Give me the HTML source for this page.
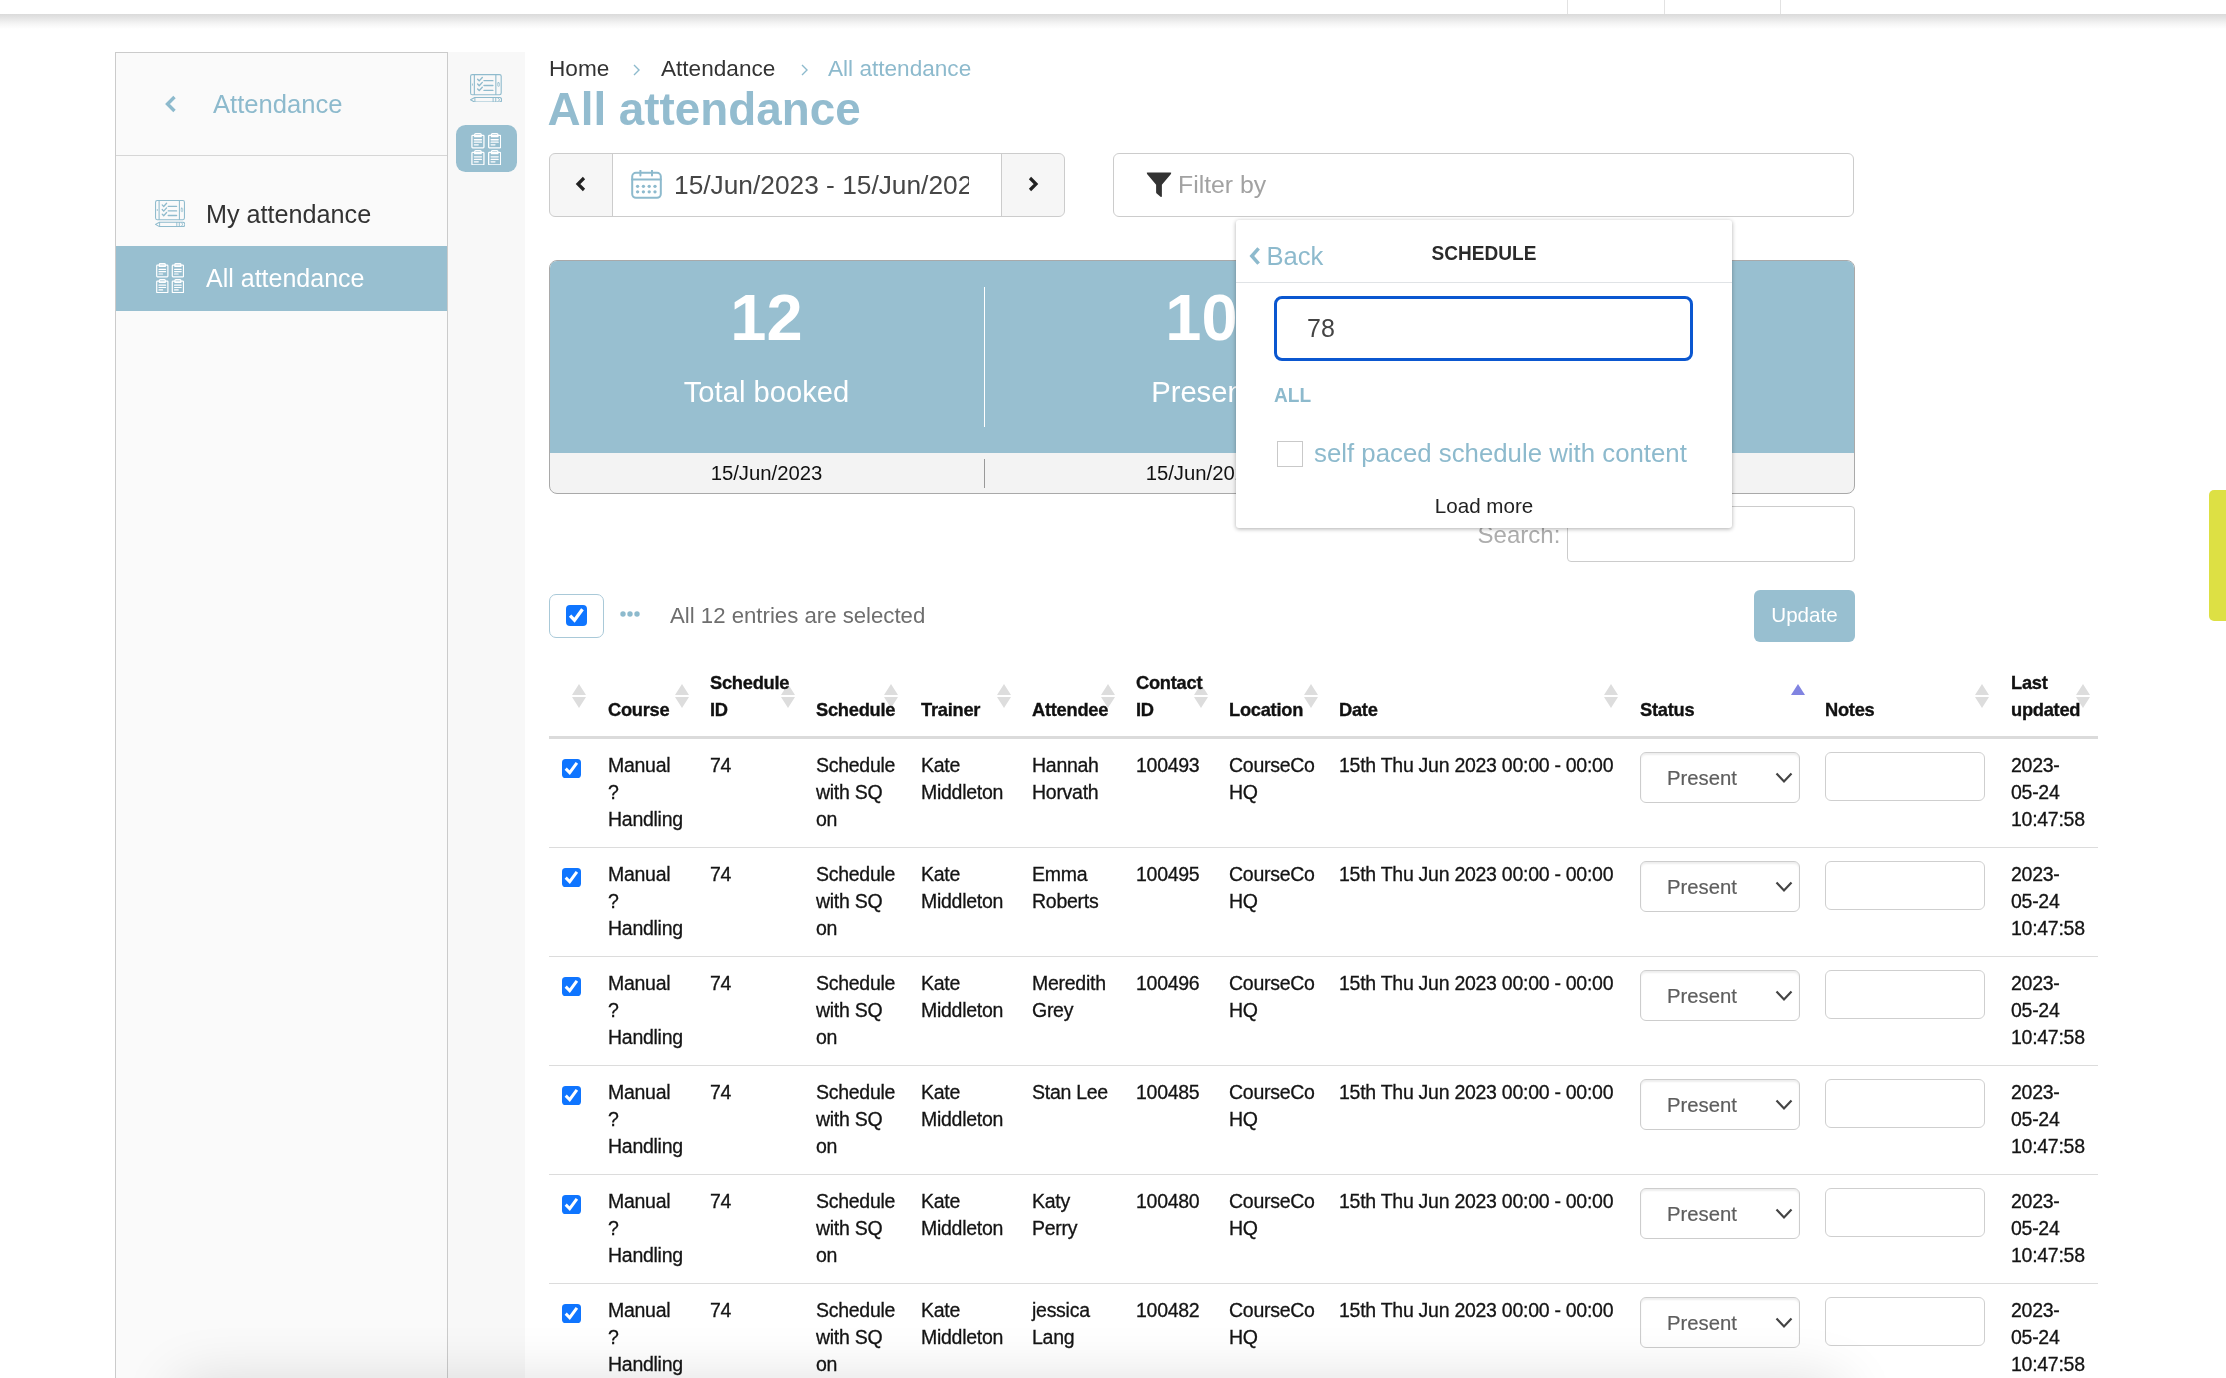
<!DOCTYPE html>
<html lang="en"><head><meta charset="utf-8"><title>All attendance</title>
<style>
*{box-sizing:border-box;margin:0;padding:0}
html,body{width:2226px;height:1378px;overflow:hidden;background:#fff}
body{font-family:"Liberation Sans",sans-serif;color:#212121;position:relative}
.abs{position:absolute}
.t{position:absolute;white-space:nowrap;line-height:1}
.blue{color:#8dbacd}
#hdr{left:0;top:0;width:2226px;height:14px;background:#fff}
#hsh{left:0;top:14px;width:2226px;height:15px;background:linear-gradient(#dadada,#e6e6e6 30%,#f5f5f5 65%,#fff)}
.vl{position:absolute;top:0;width:1.2px;height:14px;background:#e2e2e2}
#side{left:115px;top:52px;width:333px;height:1340px;background:#fafafa;border:1.3px solid #cbcbcb;border-bottom:none}
#strip{left:448px;top:52px;width:77px;height:1340px;background:#f8f8f8}
#sel{left:116px;top:246px;width:331px;height:65px;background:#98bfd0}
#sdiv{left:116px;top:154.6px;width:331px;height:1.3px;background:#d6d6d6}
#ibox{left:456px;top:125px;width:61px;height:47px;border-radius:9.5px;background:#98bfd0}
.grp{border:1.5px solid #ccc;background:#fff}
table{position:absolute;left:549px;top:660px;width:1549px;border-collapse:separate;border-spacing:0;table-layout:fixed;font-size:19.5px;letter-spacing:-0.27px;line-height:27.33px}
th{font-weight:700;text-align:left;vertical-align:bottom;height:79px;padding:0 0 13px 13px;border-bottom:3px solid #dbdbdb;font-size:19px;line-height:27px;white-space:nowrap;color:#111}
th span{display:inline-block;transform:scaleX(.962);transform-origin:left bottom;-webkit-text-stroke:0.35px #111}
td{vertical-align:top;padding:12.6px 0 0 13px;height:109px;border-bottom:1px solid #dcdcdc;white-space:nowrap;color:#141414;-webkit-text-stroke:0.3px #141414}
td.c{padding:0;position:relative}
.cb{position:absolute;left:13px;top:20px}
.sort{position:absolute;top:684px}
.selb{position:absolute;left:13px;top:13px;width:160px;height:51px;border:1.5px solid #cdcdcd;border-radius:6px;background:#fff;box-shadow:inset 0 2px 2px rgba(0,0,0,.07);letter-spacing:0;-webkit-text-stroke:0.2px #5e5e5e}
.selb span{position:absolute;left:26px;top:15px;font-size:20.3px;line-height:1;color:#5e5e5e}
.selb svg{position:absolute;left:134px;top:19px}
.note{position:absolute;left:13px;top:13px;width:160px;height:49px;border:1.5px solid #cfcfcf;border-radius:6px;background:#fff}
td.r{position:relative;padding:0}
</style></head><body><div id="wrap" style="position:absolute;left:0;top:0;width:2226px;height:1378px;overflow:hidden;will-change:transform">

<div id="hsh" class="abs"></div><div id="hdr" class="abs"><i class="vl" style="left:1567px"></i><i class="vl" style="left:1664px"></i><i class="vl" style="left:1780px"></i></div>
<div id="side" class="abs"></div><div id="strip" class="abs"></div><div id="sdiv" class="abs"></div><div id="sel" class="abs"></div><div id="ibox" class="abs"></div>
<svg class="abs" style="left:163px;top:94px" width="16" height="20" viewBox="0 0 16 20"><path d="M11.5 3L4.5 10L11.5 17" fill="none" stroke="#8dbacd" stroke-width="3.4"/></svg>
<div class="t blue" style="left:213px;top:91.8px;font-size:25.6px">Attendance</div>
<div class="abs" style="left:155px;top:199.8px"><svg width="30" height="27" viewBox="0 0 30 27" fill="none" stroke="#8fbbcd" stroke-width="1.05" stroke-linecap="round" stroke-linejoin="round"><rect x="0.55" y="0.55" width="28.9" height="19.1" rx="1.6"/><path d="M4.1 0.8V19.4M24.4 0.8V19.4"/><rect x="26.2" y="8.2" width="1.5" height="3.4" rx="0.4" stroke-width="0.7"/><path d="M2.3 9.4V10.6" stroke-width="0.8"/><path d="M7.2 4.9l1.5 1.6 2.9-3.2M7.2 9.5l1.5 1.6 2.9-3.2M7.2 14.1l1.5 1.6 2.9-3.2" stroke-width="1.3"/><path d="M13.2 6.3h8.4M13.2 10.9h8.4M13.2 15.5h8.4" stroke-width="1.3"/><path d="M0.5 24.4l4-2.2h23.2a2.2 2.2 0 0 1 0 4.4H4.5z"/><path d="M4.6 22.4v4M21.8 22.4v4M24.3 22.4v4M26.4 22.8l1.6 1.6-1.6 1.6" stroke-width="0.9"/></svg></div>
<div class="t" style="left:206px;top:202.2px;font-size:25.2px;color:#333">My attendance</div>
<div class="abs" style="left:155.8px;top:263.2px"><svg width="28.2" height="30.2" viewBox="0 0 28.2 30.2" fill="none" stroke="#fff" stroke-width="1.2" stroke-linecap="round" stroke-linejoin="round"><rect x="0.70" y="2.20" width="11.2" height="11.6" rx="0.7"/><path d="M3.30 3.40V1.50q0-.9 .9-.9h4.2q.9 0 .9 .9V3.40z"/><path d="M3.00 6.30h6.6M3.00 8.60h6.6M3.00 11.00h3.6"/><rect x="16.30" y="2.20" width="11.2" height="11.6" rx="0.7"/><path d="M18.90 3.40V1.50q0-.9 .9-.9h4.2q.9 0 .9 .9V3.40z"/><path d="M18.60 6.30h6.6M18.60 8.60h6.6M18.60 11.00h3.6"/><rect x="0.70" y="18.10" width="11.2" height="11.6" rx="0.7"/><path d="M3.30 19.30V17.40q0-.9 .9-.9h4.2q.9 0 .9 .9V19.30z"/><path d="M3.00 22.20h6.6M3.00 24.50h6.6M3.00 26.90h3.6"/><rect x="16.30" y="18.10" width="11.2" height="11.6" rx="0.7"/><path d="M18.90 19.30V17.40q0-.9 .9-.9h4.2q.9 0 .9 .9V19.30z"/><path d="M18.60 22.20h6.6M18.60 24.50h6.6M18.60 26.90h3.6"/></svg></div>
<div class="t" style="left:206px;top:266.2px;font-size:25px;color:#fff">All attendance</div>
<div class="abs" style="left:470.2px;top:73.6px"><svg width="31.8" height="28.6" viewBox="0 0 30 27" fill="none" stroke="#8fbbcd" stroke-width="1.05" stroke-linecap="round" stroke-linejoin="round"><rect x="0.55" y="0.55" width="28.9" height="19.1" rx="1.6"/><path d="M4.1 0.8V19.4M24.4 0.8V19.4"/><rect x="26.2" y="8.2" width="1.5" height="3.4" rx="0.4" stroke-width="0.7"/><path d="M2.3 9.4V10.6" stroke-width="0.8"/><path d="M7.2 4.9l1.5 1.6 2.9-3.2M7.2 9.5l1.5 1.6 2.9-3.2M7.2 14.1l1.5 1.6 2.9-3.2" stroke-width="1.3"/><path d="M13.2 6.3h8.4M13.2 10.9h8.4M13.2 15.5h8.4" stroke-width="1.3"/><path d="M0.5 24.4l4-2.2h23.2a2.2 2.2 0 0 1 0 4.4H4.5z"/><path d="M4.6 22.4v4M21.8 22.4v4M24.3 22.4v4M26.4 22.8l1.6 1.6-1.6 1.6" stroke-width="0.9"/></svg></div>
<div class="abs" style="left:470.7px;top:133.1px"><svg width="30.6" height="32.4" viewBox="0 0 28.2 30.2" fill="none" stroke="#fff" stroke-width="1.2" stroke-linecap="round" stroke-linejoin="round"><rect x="0.70" y="2.20" width="11.2" height="11.6" rx="0.7"/><path d="M3.30 3.40V1.50q0-.9 .9-.9h4.2q.9 0 .9 .9V3.40z"/><path d="M3.00 6.30h6.6M3.00 8.60h6.6M3.00 11.00h3.6"/><rect x="16.30" y="2.20" width="11.2" height="11.6" rx="0.7"/><path d="M18.90 3.40V1.50q0-.9 .9-.9h4.2q.9 0 .9 .9V3.40z"/><path d="M18.60 6.30h6.6M18.60 8.60h6.6M18.60 11.00h3.6"/><rect x="0.70" y="18.10" width="11.2" height="11.6" rx="0.7"/><path d="M3.30 19.30V17.40q0-.9 .9-.9h4.2q.9 0 .9 .9V19.30z"/><path d="M3.00 22.20h6.6M3.00 24.50h6.6M3.00 26.90h3.6"/><rect x="16.30" y="18.10" width="11.2" height="11.6" rx="0.7"/><path d="M18.90 19.30V17.40q0-.9 .9-.9h4.2q.9 0 .9 .9V19.30z"/><path d="M18.60 22.20h6.6M18.60 24.50h6.6M18.60 26.90h3.6"/></svg></div>
<div class="t" style="left:549px;top:58px;font-size:22.6px;color:#333">Home</div>
<svg class="abs" style="left:632.2px;top:62.6px" width="9" height="14" viewBox="0 0 9 14"><path d="M2 2L7 7L2 12" fill="none" stroke="#8dbacd" stroke-width="1.4"/></svg>
<div class="t" style="left:661px;top:58px;font-size:22.6px;color:#333">Attendance</div>
<svg class="abs" style="left:800.2px;top:62.6px" width="9" height="14" viewBox="0 0 9 14"><path d="M2 2L7 7L2 12" fill="none" stroke="#8dbacd" stroke-width="1.4"/></svg>
<div class="t blue" style="left:828px;top:58px;font-size:22.6px">All attendance</div>
<div class="t blue" style="left:547.6px;top:87px;font-size:45.8px;font-weight:700;color:#93bccf">All attendance</div>
<div class="abs grp" style="left:549px;top:153px;width:516px;height:64px;border-radius:6px;background:#f6f6f6"></div>
<div class="abs" style="left:612px;top:154px;width:390px;height:62px;background:#fff;border-left:1.5px solid #ccc;border-right:1.5px solid #ccc"></div>
<svg class="abs" style="left:574px;top:174.5px" width="14" height="18" viewBox="0 0 14 18"><path d="M10 3L4 9L10 15" fill="none" stroke="#222" stroke-width="3.2"/></svg>
<svg class="abs" style="left:1026px;top:175px" width="14" height="18" viewBox="0 0 14 18"><path d="M4 3L10 9L4 15" fill="none" stroke="#222" stroke-width="3.2"/></svg>
<svg class="abs" style="left:631px;top:170.2px" width="31" height="29" viewBox="0 0 31 29" fill="none" stroke="#8dbacd" stroke-width="2"><rect x="1.2" y="2.8" width="28.6" height="25" rx="3.8"/><path d="M1.2 9.6h28.6M9.4 0.6v5M21 0.6v5" stroke-linecap="round"/><g fill="#8dbacd" stroke="none"><circle cx="6.6" cy="16.3" r="1.65"/><circle cx="12.4" cy="16.3" r="1.65"/><circle cx="18.2" cy="16.3" r="1.65"/><circle cx="24" cy="16.3" r="1.65"/><circle cx="6.6" cy="21.8" r="1.65"/><circle cx="12.4" cy="21.8" r="1.65"/><circle cx="18.2" cy="21.8" r="1.65"/><circle cx="24" cy="21.8" r="1.65"/></g></svg>
<div class="t" style="left:674px;top:172px;font-size:26.3px;color:#464646;width:295px;overflow:hidden">15/Jun/2023 - 15/Jun/2023</div>
<div class="abs grp" style="left:1113px;top:153px;width:741px;height:64px;border-radius:6px"></div>
<svg class="abs" style="left:1145.8px;top:172px" width="26" height="26" viewBox="0 0 26 27"><path d="M1.2 0.5h23.6q1.6 0 .6 1.5L16 13.2V25q0 1.6-1.4 .7L10.6 22.4q-.6-.5-.6-1.4V13.2L.6 2Q-.4.5 1.2.5z" fill="#333"/></svg>
<div class="t" style="left:1178px;top:173.4px;font-size:24.8px;color:#a2a2a2">Filter by</div>
<div class="abs" style="left:549px;top:260px;width:1306px;height:234px;border-radius:8px;border:1.5px solid #a9a9a9;overflow:hidden;background:#f3f3f3"><div style="height:192px;background:#98bfd0"></div></div>
<div class="abs" style="left:984px;top:287px;width:1px;height:140px;background:#fff"></div>
<div class="abs" style="left:984px;top:459px;width:1px;height:29px;background:#999"></div>
<div class="t" style="left:549px;width:435px;text-align:center;top:285.4px;font-size:65px;font-weight:700;color:#fff">12</div>
<div class="t" style="left:984px;width:435px;text-align:center;top:285.4px;font-size:65px;font-weight:700;color:#fff">10</div>
<div class="t" style="left:549px;width:435px;text-align:center;top:378px;font-size:29.2px;color:#fff">Total booked</div>
<div class="t" style="left:984px;width:435px;text-align:center;top:378px;font-size:29.2px;color:#fff">Present</div>
<div class="t" style="left:549px;width:435px;text-align:center;top:463px;font-size:20.3px;color:#111">15/Jun/2023</div>
<div class="t" style="left:984px;width:435px;text-align:center;top:463px;font-size:20.3px;color:#111">15/Jun/2023</div>
<div class="t" style="left:1477.6px;top:523.3px;font-size:24px;color:#adadad">Search:</div>
<div class="abs grp" style="left:1567px;top:506px;width:288px;height:56px;border-radius:4px"></div>
<div class="abs" style="left:1236px;top:220px;width:496px;height:308px;background:#fff;border-radius:3px;box-shadow:0 1px 4px rgba(0,0,0,.32)"></div>
<div class="abs" style="left:1236px;top:281.5px;width:496px;height:1.5px;background:#e0e3e6"></div>
<svg class="abs" style="left:1248px;top:245.5px" width="14" height="20" viewBox="0 0 14 20"><path d="M10.6 2.3L3.8 10L10.6 17.7" fill="none" stroke="#8dbacd" stroke-width="3.5"/></svg>
<div class="t blue" style="left:1266.5px;top:243.6px;font-size:25.6px">Back</div>
<div class="t" style="left:1236px;width:496px;text-align:center;top:242.6px;font-size:20.6px;font-weight:700;transform:scaleX(.925);color:#2a2a2a">SCHEDULE</div>
<div class="abs" style="left:1274px;top:295.6px;width:419px;height:65px;border:3px solid #0b57d0;border-radius:8px;background:#fff"></div>
<div class="t" style="left:1307px;top:316px;font-size:25px;color:#444">78</div>
<div class="t" style="left:1274px;top:386.4px;font-size:19.8px;font-weight:700;transform:scaleX(.965);transform-origin:left center;color:#8dbacd">ALL</div>
<div class="abs" style="left:1277px;top:441px;width:26px;height:26px;border:1.5px solid #c9c9c9;background:#fff"></div>
<div class="t blue" style="left:1314px;top:441px;font-size:25.8px">self paced schedule with content</div>
<div class="t" style="left:1236px;width:496px;text-align:center;top:496px;font-size:20.6px;color:#222">Load more</div>
<div class="abs" style="left:549px;top:594px;width:55px;height:44px;border:1.5px solid #a9c9d8;border-radius:7px;background:#fff"></div>
<div class="abs" style="left:566px;top:605px"><svg width="21" height="21" viewBox="0 0 19 19"><rect x="0" y="0" width="19" height="19" rx="3.6" fill="#0f75ff"/><path d="M3.7 9.6L7.7 13.7L14.9 3.8" fill="none" stroke="#fff" stroke-width="3"/></svg></div>
<svg class="abs" style="left:619px;top:610px" width="22" height="8" viewBox="0 0 22 8"><g fill="#8dbacd"><circle cx="4" cy="4" r="2.7"/><circle cx="11" cy="4" r="2.7"/><circle cx="18" cy="4" r="2.7"/></g></svg>
<div class="t" style="left:670px;top:605px;font-size:22.2px;color:#6e6e6e">All 12 entries are selected</div>
<div class="abs" style="left:1754px;top:590px;width:101px;height:52px;border-radius:6px;background:#98bfd0"></div>
<div class="t" style="left:1754px;width:101px;text-align:center;top:605px;font-size:20.6px;color:#fff">Update</div>
<div class="abs" style="left:2209px;top:490px;width:20px;height:131px;border-radius:5px 0 0 5px;background:#dde044"></div>
<svg class="sort" style="left:572px" width="14" height="24" viewBox="0 0 14 24"><path d="M7 0L14 11H0Z M0 13H14L7 24Z" fill="#ddd"/></svg>
<svg class="sort" style="left:675px" width="14" height="24" viewBox="0 0 14 24"><path d="M7 0L14 11H0Z M0 13H14L7 24Z" fill="#ddd"/></svg>
<svg class="sort" style="left:781px" width="14" height="24" viewBox="0 0 14 24"><path d="M7 0L14 11H0Z M0 13H14L7 24Z" fill="#ddd"/></svg>
<svg class="sort" style="left:884px" width="14" height="24" viewBox="0 0 14 24"><path d="M7 0L14 11H0Z M0 13H14L7 24Z" fill="#ddd"/></svg>
<svg class="sort" style="left:997px" width="14" height="24" viewBox="0 0 14 24"><path d="M7 0L14 11H0Z M0 13H14L7 24Z" fill="#ddd"/></svg>
<svg class="sort" style="left:1101px" width="14" height="24" viewBox="0 0 14 24"><path d="M7 0L14 11H0Z M0 13H14L7 24Z" fill="#ddd"/></svg>
<svg class="sort" style="left:1194px" width="14" height="24" viewBox="0 0 14 24"><path d="M7 0L14 11H0Z M0 13H14L7 24Z" fill="#ddd"/></svg>
<svg class="sort" style="left:1304px" width="14" height="24" viewBox="0 0 14 24"><path d="M7 0L14 11H0Z M0 13H14L7 24Z" fill="#ddd"/></svg>
<svg class="sort" style="left:1604px" width="14" height="24" viewBox="0 0 14 24"><path d="M7 0L14 11H0Z M0 13H14L7 24Z" fill="#ddd"/></svg>
<svg class="sort" style="left:1975px" width="14" height="24" viewBox="0 0 14 24"><path d="M7 0L14 11H0Z M0 13H14L7 24Z" fill="#ddd"/></svg>
<svg class="sort" style="left:2076px" width="14" height="24" viewBox="0 0 14 24"><path d="M7 0L14 11H0Z M0 13H14L7 24Z" fill="#ddd"/></svg>
<svg class="sort" style="left:1791px" width="14" height="24" viewBox="0 0 14 24"><path d="M7 0L14 11H0Z" fill="#8184e1"/></svg>
<table><colgroup><col style="width:46px"><col style="width:102px"><col style="width:106px"><col style="width:105px"><col style="width:111px"><col style="width:104px"><col style="width:93px"><col style="width:110px"><col style="width:301px"><col style="width:185px"><col style="width:186px"><col style="width:100px"></colgroup>
<thead><tr><th></th><th><span>Course</span></th><th><span>Schedule<br>ID</span></th><th><span>Schedule</span></th><th><span>Trainer</span></th><th><span>Attendee</span></th><th><span>Contact<br>ID</span></th><th><span>Location</span></th><th><span>Date</span></th><th><span>Status</span></th><th><span>Notes</span></th><th><span>Last<br>updated</span></th></tr></thead><tbody>
<tr><td class="c"><svg class="cb" width="19" height="19" viewBox="0 0 19 19"><rect x="0" y="0" width="19" height="19" rx="3.6" fill="#0f75ff"/><path d="M3.7 9.6L7.7 13.7L14.9 3.8" fill="none" stroke="#fff" stroke-width="3"/></svg></td><td>Manual<br>?<br>Handling</td><td>74</td><td>Schedule<br>with SQ<br>on</td><td>Kate<br>Middleton</td><td>Hannah<br>Horvath</td><td>100493</td><td>CourseCo<br>HQ</td><td>15th Thu Jun 2023 00:00 - 00:00</td><td class="r"><div class="selb"><span>Present</span><svg width="18" height="12" viewBox="0 0 18 12"><path d="M1.5 1.5L9 9.5L16.5 1.5" fill="none" stroke="#444" stroke-width="2.2"/></svg></div></td><td class="r"><div class="note"></div></td><td>2023-<br>05-24<br>10:47:58</td></tr>
<tr><td class="c"><svg class="cb" width="19" height="19" viewBox="0 0 19 19"><rect x="0" y="0" width="19" height="19" rx="3.6" fill="#0f75ff"/><path d="M3.7 9.6L7.7 13.7L14.9 3.8" fill="none" stroke="#fff" stroke-width="3"/></svg></td><td>Manual<br>?<br>Handling</td><td>74</td><td>Schedule<br>with SQ<br>on</td><td>Kate<br>Middleton</td><td>Emma<br>Roberts</td><td>100495</td><td>CourseCo<br>HQ</td><td>15th Thu Jun 2023 00:00 - 00:00</td><td class="r"><div class="selb"><span>Present</span><svg width="18" height="12" viewBox="0 0 18 12"><path d="M1.5 1.5L9 9.5L16.5 1.5" fill="none" stroke="#444" stroke-width="2.2"/></svg></div></td><td class="r"><div class="note"></div></td><td>2023-<br>05-24<br>10:47:58</td></tr>
<tr><td class="c"><svg class="cb" width="19" height="19" viewBox="0 0 19 19"><rect x="0" y="0" width="19" height="19" rx="3.6" fill="#0f75ff"/><path d="M3.7 9.6L7.7 13.7L14.9 3.8" fill="none" stroke="#fff" stroke-width="3"/></svg></td><td>Manual<br>?<br>Handling</td><td>74</td><td>Schedule<br>with SQ<br>on</td><td>Kate<br>Middleton</td><td>Meredith<br>Grey</td><td>100496</td><td>CourseCo<br>HQ</td><td>15th Thu Jun 2023 00:00 - 00:00</td><td class="r"><div class="selb"><span>Present</span><svg width="18" height="12" viewBox="0 0 18 12"><path d="M1.5 1.5L9 9.5L16.5 1.5" fill="none" stroke="#444" stroke-width="2.2"/></svg></div></td><td class="r"><div class="note"></div></td><td>2023-<br>05-24<br>10:47:58</td></tr>
<tr><td class="c"><svg class="cb" width="19" height="19" viewBox="0 0 19 19"><rect x="0" y="0" width="19" height="19" rx="3.6" fill="#0f75ff"/><path d="M3.7 9.6L7.7 13.7L14.9 3.8" fill="none" stroke="#fff" stroke-width="3"/></svg></td><td>Manual<br>?<br>Handling</td><td>74</td><td>Schedule<br>with SQ<br>on</td><td>Kate<br>Middleton</td><td>Stan Lee</td><td>100485</td><td>CourseCo<br>HQ</td><td>15th Thu Jun 2023 00:00 - 00:00</td><td class="r"><div class="selb"><span>Present</span><svg width="18" height="12" viewBox="0 0 18 12"><path d="M1.5 1.5L9 9.5L16.5 1.5" fill="none" stroke="#444" stroke-width="2.2"/></svg></div></td><td class="r"><div class="note"></div></td><td>2023-<br>05-24<br>10:47:58</td></tr>
<tr><td class="c"><svg class="cb" width="19" height="19" viewBox="0 0 19 19"><rect x="0" y="0" width="19" height="19" rx="3.6" fill="#0f75ff"/><path d="M3.7 9.6L7.7 13.7L14.9 3.8" fill="none" stroke="#fff" stroke-width="3"/></svg></td><td>Manual<br>?<br>Handling</td><td>74</td><td>Schedule<br>with SQ<br>on</td><td>Kate<br>Middleton</td><td>Katy<br>Perry</td><td>100480</td><td>CourseCo<br>HQ</td><td>15th Thu Jun 2023 00:00 - 00:00</td><td class="r"><div class="selb"><span>Present</span><svg width="18" height="12" viewBox="0 0 18 12"><path d="M1.5 1.5L9 9.5L16.5 1.5" fill="none" stroke="#444" stroke-width="2.2"/></svg></div></td><td class="r"><div class="note"></div></td><td>2023-<br>05-24<br>10:47:58</td></tr>
<tr><td class="c"><svg class="cb" width="19" height="19" viewBox="0 0 19 19"><rect x="0" y="0" width="19" height="19" rx="3.6" fill="#0f75ff"/><path d="M3.7 9.6L7.7 13.7L14.9 3.8" fill="none" stroke="#fff" stroke-width="3"/></svg></td><td>Manual<br>?<br>Handling</td><td>74</td><td>Schedule<br>with SQ<br>on</td><td>Kate<br>Middleton</td><td>jessica<br>Lang</td><td>100482</td><td>CourseCo<br>HQ</td><td>15th Thu Jun 2023 00:00 - 00:00</td><td class="r"><div class="selb"><span>Present</span><svg width="18" height="12" viewBox="0 0 18 12"><path d="M1.5 1.5L9 9.5L16.5 1.5" fill="none" stroke="#444" stroke-width="2.2"/></svg></div></td><td class="r"><div class="note"></div></td><td>2023-<br>05-24<br>10:47:58</td></tr>
</tbody></table>
<div class="abs" style="left:215px;top:1418px;width:1590px;height:40px;box-shadow:0 0 60px 36px rgba(0,0,0,.14)"></div>
</div></body></html>
